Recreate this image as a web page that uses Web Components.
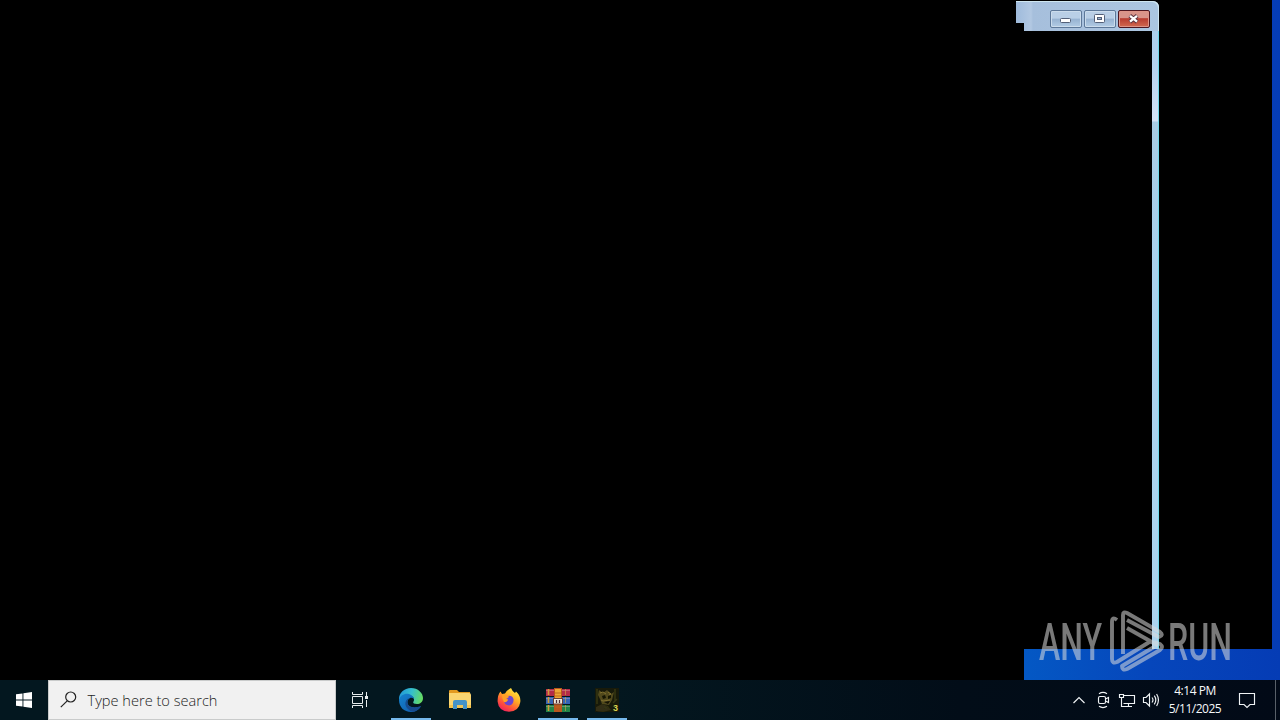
<!DOCTYPE html>
<html lang="en"><head><meta charset="utf-8"><title>Desktop</title>
<style>html,body{margin:0;height:100%;overflow:hidden;background:#000}</style></head><body>
<desk-screen>
  <wall-paper></wall-paper>
  <aero-window></aero-window>
  <water-mark></water-mark>
  <task-bar slot="bar">
    <start-button></start-button>
    <search-box>Type here to search</search-box>
    <task-icon kind="view"></task-icon>
    <task-icon kind="edge" open></task-icon>
    <task-icon kind="folder"></task-icon>
    <task-icon kind="firefox"></task-icon>
    <task-icon kind="rar" open></task-icon>
    <task-icon kind="game" open></task-icon>
    <system-tray slot="end"><span slot="time">4:14 PM</span><span slot="date">5/11/2025</span></system-tray>
  </task-bar>
</desk-screen>
<script>
const define=(name,html)=>customElements.define(name,class extends HTMLElement{
  constructor(){super();this.attachShadow({mode:'open'}).innerHTML=html;}
});
define('desk-screen',`<style>:host{display:grid;grid-template-rows:680px 40px;width:1280px;height:720px;background:#000}
.stage{position:relative;overflow:hidden}</style><div class="stage"><slot></slot></div><slot name="bar"></slot>`);

define('wall-paper',`<style>:host{display:block;position:absolute;inset:0;background:linear-gradient(90deg,#0458c4 1024px,#0646bb 1150px,#053cb5 1280px);
clip-path:polygon(1272px 0,1280px 0,1280px 680px,1024px 680px,1024px 649px,1272px 649px)}</style>`);

define('aero-window',`<style>
:host{display:flex;flex-direction:column;position:absolute;left:1016px;top:1px;width:143px;height:648px}
.title{box-sizing:border-box;height:30px;flex:none;display:flex;justify-content:flex-end;gap:2px;padding:9px 9px 0 0;
background:linear-gradient(90deg,#9fbbdc 0,#b2c8e2 15px,#a6bfdc 17px,#a9c2de 50%,#abc6e0);border-radius:0 6px 0 0;
clip-path:polygon(0 0,100% 0,100% 100%,8px 100%,8px 22px,0 22px)}
.title{box-shadow:inset -1px 1px #cfe6f0}
.b{box-sizing:border-box;width:32px;height:18px;border:1px solid #5d7899;border-radius:2px;box-shadow:inset 0 0 0 1px #cbdcec;
background:linear-gradient(#b9cfe6 0 45%,#96b2d1 50%,#b2cce5);display:grid;place-items:center}
.c{border-color:#4c1620;background:linear-gradient(#d8948a 0 42%,#b83c30 48%,#d16a51);box-shadow:inset 0 0 0 1px #dd9488}
svg{display:block}
.side{box-sizing:border-box;width:7px;flex:1;align-self:flex-end;border-right:1px solid #70d8e9;
background:linear-gradient(#acd0ec 0,#b5d2ef 35px,#d3e2f6 88px,#d3e2f6 90px,#a8cce4 91px,#a9d2ee 240px,#acd4ee 100%)}
</style>
<div class="title">
<div class="b"><svg width="16" height="14"><rect x="2.5" y="6.5" width="10" height="4" rx="1" fill="#fff" stroke="#536078"/></svg></div>
<div class="b"><svg width="16" height="14"><rect x="2.5" y="2.5" width="10" height="8" rx="1" fill="#fff" stroke="#536078"/><rect x="5.5" y="5.5" width="4" height="2" fill="#9cb5d1" stroke="#536078"/></svg></div>
<div class="b c"><svg width="16" height="14"><path d="M3.8 3.7 11.2 9.8M11.2 3.7 3.8 9.8" stroke="#5b3440" stroke-width="4.2"/><path d="M4 3.9 11 9.6M11 3.9 4 9.6" stroke="#fff" stroke-width="2.4"/></svg></div>
</div><div class="side"></div>`);

define('water-mark',`<style>:host{display:block;position:absolute;left:1036px;top:606px;opacity:.55}svg{display:block;overflow:visible}
text{font:500 52px Roboto,sans-serif;fill:#dcdcdc}</style>
<svg width="220" height="74"><text x="3" y="53.5" textLength="63" lengthAdjust="spacingAndGlyphs">ANY</text>
<text x="132" y="53.5" textLength="64" lengthAdjust="spacingAndGlyphs">RUN</text>
<g fill="none" stroke="#dcdcdc" stroke-width="3.9" stroke-linejoin="round" stroke-linecap="butt">
<path d="M87 48V9Q87 5 91 7L124 26Q128 29 123 31L91 14"/>
<path d="M81 14Q76 10 76 16V53Q76 58 81 56L115 35"/>
<path d="M91 22 122 39.5"/>
<path d="M118 36 124 38Q128 41 124 44L91 63Q86 65 86 60L118 41"/>
</g></svg>`);

define('task-bar',`<style>:host{display:flex;height:40px;background:linear-gradient(90deg,#03171f 0,#03171f 48%,#020d18 75%,#020a17);justify-content:space-between}
.apps{display:flex}</style><div class="apps"><slot></slot></div><slot name="end"></slot>`);

define('start-button',`<style>:host{display:grid;place-items:center;width:48px;height:40px}svg{display:block}</style>
<svg width="16" height="16" fill="#fff"><path d="M0 2.3 6.5 1.4V7.5H0ZM7.4 1.3 16 0V7.5H7.4ZM0 8.4H6.5V14.6L0 13.7ZM7.4 8.4H16V16L7.4 14.8Z"/></svg>`);

define('search-box',`<style>:host{box-sizing:border-box;display:flex;align-items:center;width:288px;height:40px;border:1px solid #c9cbcb;background:#f1f1f1;padding-left:11px;gap:9.5px;color:#1c1c1c;font:300 14.6px "Open Sans","Noto Sans",sans-serif;white-space:nowrap}
svg{display:block}</style><svg width="18" height="18" fill="none" stroke="#222" stroke-width="1.2"><circle cx="10.7" cy="6" r="5"/><path d="M7.2 9.8.8 16.2"/></svg><span><slot></slot></span>`);

const icons={
view:`<svg width="18" height="18" viewBox="0 0 18 18" fill="none" stroke="#e7ecee"><path d="M1.5 1V3.5H11.5V1M1.5 17V14.5H11.5V17M1.5 5.5H11.5V12.5H1.5ZM15.5 1V5M15.5 9V16"/><path d="M14 5H17V8H14Z" fill="#e7ecee" stroke="none"/></svg>`,
edge:`<svg width="24" height="24" viewBox="0 0 24 24"><defs><linearGradient id="a" x1="0" y1=".3" x2="1" y2=".5"><stop stop-color="#2196d8"/><stop offset=".5" stop-color="#35bfcd"/><stop offset="1" stop-color="#66dc61"/></linearGradient><linearGradient id="b" x1="0" y1="0" x2="1" y2="1"><stop stop-color="#1583cf"/><stop offset="1" stop-color="#1157a8"/></linearGradient></defs>
<path d="M0 11C0 5 5 0 12 0S24 5 24 10C24 14 21 16 18 16 15 16 14 15 14.2 14 16 12 15 8 10.5 7.5 5 7 1 9 0 13Z" fill="url(#a)"/><path d="M0 12C1 7 6 5 10 6 13 7 15 9 15 11 12 8 8 11 8.5 15 9 19 15 21 22 18 20 22 16 24 12 24 5 24 0 19 0 12Z" fill="url(#b)"/><path d="M8.5 11C4 15 7 22 14 23.8 17 23.5 20 21 22 18 15 21 9 19 8.5 15 8 13 9 11 10.5 10Z" fill="#174b8f"/></svg>`,
folder:`<svg width="22" height="20" viewBox="0 0 22 20"><path d="M0 1Q0 0 1 0H8L10 2H21V18H0Z" fill="#e39a20"/><path d="M0 3H20Q22 3 22 5V18H0Z" fill="#fbd570"/><path d="M0 15H22V18H0Z" fill="#f5c34b"/><path d="M4 19V12Q4 10 6 10H16Q18 10 18 12V19H14V15H8V19Z" fill="#4593c8"/><path d="M8 15H14V18H8Z" fill="#efc55a"/></svg>`,
firefox:`<svg width="24" height="24" viewBox="0 0 24 24"><defs><linearGradient id="a" x1=".8" y1="0" x2=".2" y2="1"><stop stop-color="#fff044"/><stop offset=".4" stop-color="#ffab25"/><stop offset=".7" stop-color="#ff5638"/><stop offset="1" stop-color="#ef1763"/></linearGradient></defs><path d="M3.5 3.5 5 6 8 5.5Q10 2 14 0 15 3 18 5L19 3.5Q24 8 23.3 14 22 23.5 12 23.8 1.5 23.2.6 13.5.5 7 3.5 3.5Z" fill="url(#a)"/><path d="M7 10 11 8Q15 7 16.5 11 17 17 12 17.5 8 17 7 14L10 13 11 11Z" fill="#6b45cf"/><path d="M5 7Q10 5 12 9L9 11 11 12Q9 15 7 14 5 11 5 7Z" fill="#ffa027"/></svg>`,
rar:`<svg width="24" height="24" viewBox="0 0 24 24"><path d="M0 1H24V8H0Z" fill="#b32c49"/><path d="M0 9H24V16H0Z" fill="#3464b5"/><path d="M0 17H24V24H0Z" fill="#218347"/><path d="M0 2.5H24M0 10.5H24M0 18.5H24" stroke="#e5bdc5" stroke-opacity=".35"/><path d="M2.5 1V7M2.5 9V15M2.5 17V23" stroke="#d09a3a" stroke-width="1.6"/><path d="M19.5 1V7M19.5 9V15M19.5 17V23" stroke="#d0a94a" stroke-opacity=".6"/><path d="M8 0H16V24H8Z" fill="#b8561e"/><path d="M9 1H15V12H9Z" fill="#eda735"/><path d="M9 5H15M9 8H15M9 19H15" stroke="#bd671f"/><rect x="7.5" y="10.5" width="9" height="5.5" fill="#f3e9dc" stroke="#663e36"/><path d="M10.5 12V15M13.5 12V15" stroke="#502e38" stroke-width="1.3"/></svg>`,
game:`<svg width="24" height="24" viewBox="0 0 24 24"><defs><filter id="s"><feGaussianBlur stdDeviation=".6"/></filter></defs><path d="M0 0H24V24H0Z" fill="#181a0a"/><g filter="url(#s)"><path d="M4 2 8 5 12 2 16 6 19 4 17 12 14 17 7 16 5 11 3 7Z" fill="#51491e"/><path d="M1 19 7 16 13 18 16 22 8 24 1 23Z" fill="#302e12"/><path d="M5 5 8 4 11 6M13 4 16 6 14 7M6 12 8 13 15 12" stroke="#81702e" fill="none"/><path d="M7 8 10 7 11 10 8 11ZM13 8 16 7 16 10 13 11ZM9 14 15 13 13 16Z" fill="#121204"/><path d="M2 1 2 16M20 1V13M18 15 22 11M9 19 12 20" stroke="#343515" stroke-width="1.5"/></g><text x="18" y="23" font-family="Liberation Sans" font-size="9" font-weight="bold" fill="#d9d552">3</text></svg>`};
customElements.define('task-icon',class extends HTMLElement{
 constructor(){super();this.attachShadow({mode:'open'});}
 connectedCallback(){this.shadowRoot.innerHTML=`<style>:host{box-sizing:border-box;display:grid;place-items:center;width:49px;height:40px}:host([kind=view]){width:50px;padding-right:2px}:host([open]){background:linear-gradient(#76b9ed,#76b9ed) 5px 100%/40px 2px no-repeat}svg{display:block}</style>${icons[this.getAttribute('kind')]}`;}
});

define('system-tray',`<style>:host{display:flex;height:40px;color:#f6f8fa;font:400 12px/18px "Open Sans","Noto Sans",sans-serif}
svg{display:block;fill:none;stroke:#f0f3f5;stroke-width:1.15}.i{width:24px;display:grid;place-items:center}
.clock{width:64px;text-align:center;padding-top:2px;letter-spacing:-.48px;white-space:nowrap}.clock div{height:18px}.note{width:40px;display:grid;place-items:center}.end{width:4px;border-left:1px solid #596069;margin-left:8px}</style>
<div class="i"><svg width="14" height="10"><path d="M1.5 8 7 2.5 12.5 8"/></svg></div>
<div class="i"><svg width="14" height="18"><rect x="2.5" y="5.5" width="7" height="7" rx="1.5"/><path d="M9.5 8 12.5 6.5V11.5L9.5 10M3 2.7Q7 .2 11 2.7M3 15.3Q7 17.8 11 15.3"/></svg></div>
<div class="i"><svg width="18" height="16"><path d="M5.5 3.5H16.5V11.5H5.5M10.5 11.5V14.5M7 14.5H14M1.5 2.5H5.5V5.5H1.5ZM3.5 5.5V14.5H7"/></svg></div>
<div class="i"><svg width="18" height="16"><path d="M1.5 5.5H4L7.5 2V14L4 10.5H1.5ZM10 5.5Q12 8 10 10.5M12.3 3.7Q15.3 8 12.3 12.3M14.6 2Q18.3 8 14.6 14"/></svg></div>
<div class="clock"><div><slot name="time"></slot></div><div><slot name="date"></slot></div></div>
<div class="note"><svg width="18" height="18"><path d="M1.5 2.5H16.5V13.5H12L9 16.5 6 13.5H1.5Z"/></svg></div><div class="end"></div>`);
</script></body></html>
